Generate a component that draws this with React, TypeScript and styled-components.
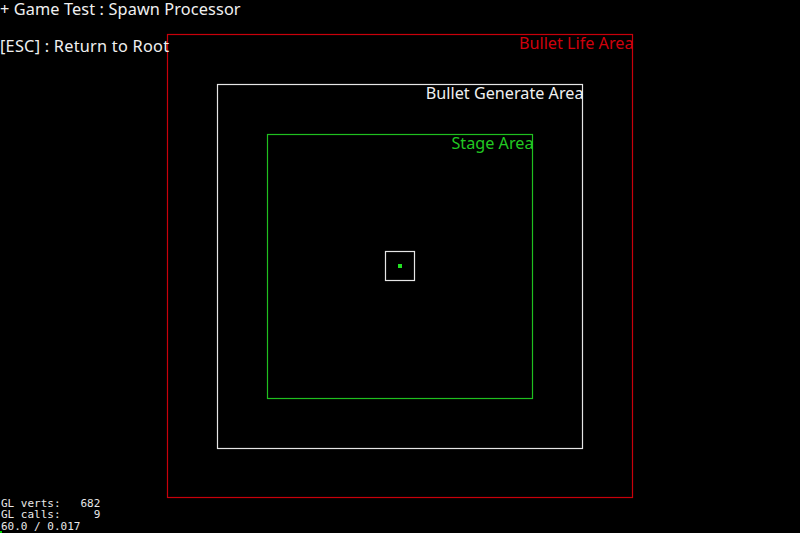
import React from "react";
import styled, { createGlobalStyle } from "styled-components";

const Global = createGlobalStyle`
  html, body { margin: 0; padding: 0; background: #000; overflow: hidden; }
  #root { width: 800px; height: 533px; }
`;

const Screen = styled.div`
  position: relative;
  width: 800px;
  height: 533px;
  background: #000;
  overflow: hidden;
  font-family: "Noto Sans", "Open Sans", sans-serif;
`;

const Canvas = styled.svg`
  position: absolute;
  left: 0;
  top: 0;
`;

const Header = styled.div`
  position: absolute;
  left: 0;
  top: 0;
  display: flex;
  flex-direction: column;
  gap: 18px;
  color: #f0f0f0;
  font-size: 16.3px;
  letter-spacing: 0.12px;
  line-height: 19px;
  white-space: pre;
`;

const HeaderLine = styled.span<{ $spacing?: string }>`
  letter-spacing: ${(p) => p.$spacing ?? "inherit"};
`;

const AreaLabel = styled.div<{ $color: string }>`
  position: absolute;
  color: ${(p) => p.$color};
  font-size: 16.2px;
  line-height: 16px;
  white-space: pre;
  transform: translateX(-100%);
`;

const Stats = styled.div`
  position: absolute;
  left: 1px;
  bottom: 1px;
  display: flex;
  flex-direction: column;
  color: #e8e8e8;
  font-family: "DejaVu Sans Mono", "Liberation Mono", monospace;
  font-size: 11px;
  line-height: 11.5px;
  white-space: pre;
`;

const Cursor = styled.div`
  position: absolute;
  left: 0;
  bottom: 0;
  width: 2px;
  height: 2px;
  background: #00e000;
`;

type Area = { x: number; y: number; w: number; h: number; color: string; label: string; labelColor: string };

const areas: Area[] = [
  { x: 167.5, y: 34.5, w: 465, h: 463, color: "#c8000a", label: "Bullet Life Area", labelColor: "#d0000c" },
  { x: 217.5, y: 84.5, w: 365, h: 364, color: "#e6e6e6", label: "Bullet Generate Area", labelColor: "#f0f0f0" },
  { x: 267.5, y: 134.5, w: 265, h: 264, color: "#1fbf1f", label: "Stage Area", labelColor: "#22c822" },
];

export default function App() {
  return (
    <>
      <Global />
      <Screen>
        <Canvas width={800} height={533} viewBox="0 0 800 533">
          {areas.map((a) => (
            <rect key={a.x} x={a.x} y={a.y} width={a.w} height={a.h} fill="none" stroke={a.color} strokeWidth={1.2} />
          ))}
          <rect x={385.5} y={251.5} width={29} height={29} fill="none" stroke="#e6e6e6" strokeWidth={1.2} />
          <rect x={398} y={264} width={4} height={4} fill="#22e022" />
        </Canvas>
        {areas.map((a) => (
          <AreaLabel key={a.label} $color={a.labelColor} style={{ left: a.x + a.w + 1, top: a.y }}>
            {a.label}
          </AreaLabel>
        ))}
        <Header>
          <HeaderLine>+ Game Test : Spawn Processor</HeaderLine>
          <HeaderLine $spacing="0.25px">[ESC] : Return to Root</HeaderLine>
        </Header>
        <Stats>
          <span>GL verts:   682</span>
          <span>GL calls:     9</span>
          <span>60.0 / 0.017</span>
        </Stats>
        <Cursor />
      </Screen>
    </>
  );
}
